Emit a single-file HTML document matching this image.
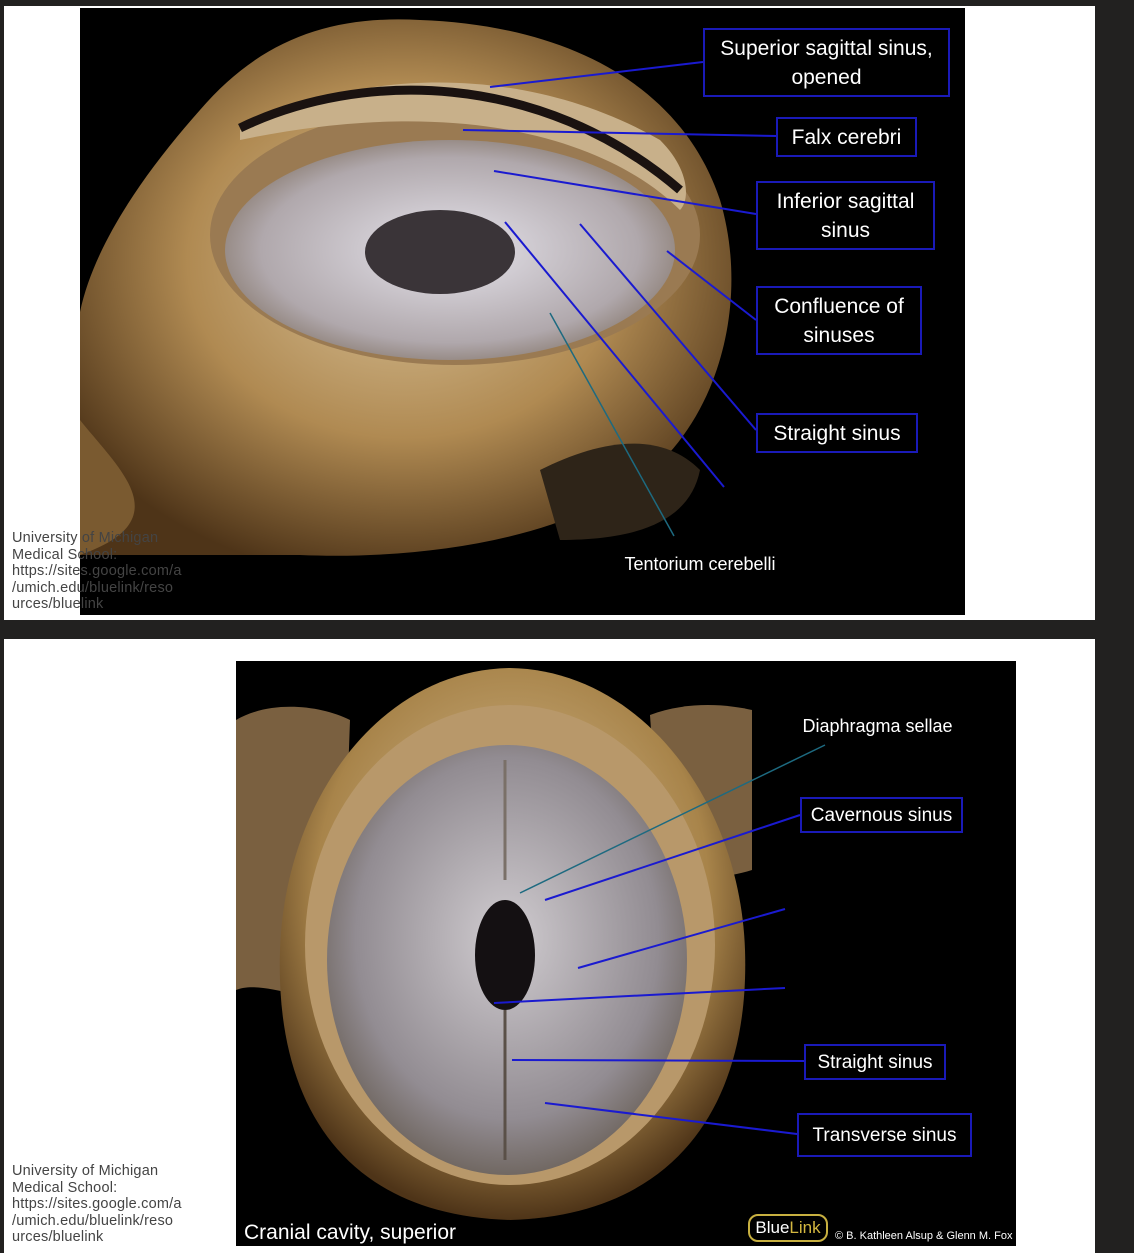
<!DOCTYPE html>
<html><head><meta charset="utf-8"><style>
html,body{margin:0;padding:0;background:#222120;}
body{width:1134px;height:1253px;position:relative;overflow:hidden;font-family:"Liberation Sans",sans-serif;}
.slide{position:absolute;left:4px;width:1091px;background:#fff;}
.lbl{position:absolute;color:#fff;font-size:21px;text-align:center;line-height:29px;box-sizing:border-box;}
.bx{border:2px solid #1a1ab8;}
.cred{position:absolute;left:12px;font-size:14.5px;line-height:16.5px;color:#444;letter-spacing:0.2px;}
</style></head><body>
<div class="slide" style="top:6px;height:614px"></div>
<div class="slide" style="top:639px;height:614px"></div>

<svg width="1134" height="1253" style="position:absolute;left:0;top:0">
<defs>
<radialGradient id="tan" cx="50%" cy="45%" r="60%">
<stop offset="0" stop-color="#d8c29a"/><stop offset="0.55" stop-color="#b08a52"/><stop offset="1" stop-color="#4e3418"/></radialGradient>
<radialGradient id="inner" cx="50%" cy="50%" r="60%">
<stop offset="0" stop-color="#e6e4ec"/><stop offset="0.7" stop-color="#b0a8ac"/><stop offset="1" stop-color="#7a6a5a"/></radialGradient>
<radialGradient id="tan2" cx="50%" cy="40%" r="60%">
<stop offset="0" stop-color="#d9c197"/><stop offset="0.7" stop-color="#a8844a"/><stop offset="1" stop-color="#4e3418"/></radialGradient>
<radialGradient id="inner2" cx="50%" cy="45%" r="60%">
<stop offset="0" stop-color="#d0ccd0"/><stop offset="0.7" stop-color="#928c92"/><stop offset="1" stop-color="#645a50"/></radialGradient>
<clipPath id="c1"><rect x="80" y="8" width="885" height="607"/></clipPath>
<clipPath id="c2"><rect x="236" y="661" width="780" height="585"/></clipPath>
</defs>
<rect x="80" y="8" width="885" height="607" fill="#000"/>
<g clip-path="url(#c1)">
<path d="M80 380 C60 300 120 200 200 110 C260 40 330 15 420 20 C560 25 680 80 720 200 C750 300 720 420 640 480 C560 540 420 560 300 555 L80 555 Z" fill="url(#tan)"/>
<path d="M80 420 C120 470 180 520 80 555 Z" fill="#7a5a30"/>
<ellipse cx="455" cy="235" rx="245" ry="130" fill="#9a7a52"/>
<ellipse cx="450" cy="250" rx="225" ry="110" fill="url(#inner)"/>
<path d="M240 130 C350 70 520 60 660 140 C690 170 690 200 680 210 C620 150 480 90 240 140 Z" fill="#c8b08a"/>
<path d="M240 128 C360 70 540 70 680 190" stroke="#1a1210" stroke-width="9" fill="none"/>
<ellipse cx="440" cy="252" rx="75" ry="42" fill="#3a3438"/>
<path d="M540 470 C600 440 660 430 700 470 C690 520 640 540 560 540 Z" fill="#2e2418"/>
</g>
<g stroke="#1a1ad0" stroke-width="2" fill="none">
<line x1="490" y1="87" x2="703" y2="62"/>
<line x1="463" y1="130" x2="777" y2="136"/>
<line x1="494" y1="171" x2="756" y2="214"/>
<line x1="667" y1="251" x2="756" y2="320"/>
<line x1="580" y1="224" x2="756" y2="430"/>
<line x1="505" y1="222" x2="724" y2="487"/>
</g>
<line x1="550" y1="313" x2="674" y2="536" stroke="#1d6a80" stroke-width="1.5"/>

<rect x="236" y="661" width="780" height="585" fill="#000"/>
<g clip-path="url(#c2)">
<path d="M236 720 C270 700 320 705 350 720 L340 1000 C300 1000 260 980 236 990 Z" fill="#7a6040"/>
<path d="M650 715 C690 700 730 705 752 710 L752 870 C720 880 690 880 660 860 Z" fill="#7a6040"/>
<path d="M510 668 C640 670 740 800 745 950 C750 1100 680 1215 510 1220 C340 1215 275 1100 280 950 C285 800 380 670 510 668 Z" fill="url(#tan2)"/>
<ellipse cx="510" cy="945" rx="205" ry="240" fill="#b8986a"/>
<ellipse cx="507" cy="960" rx="180" ry="215" fill="url(#inner2)"/>
<ellipse cx="505" cy="955" rx="30" ry="55" fill="#141012"/>
<path d="M505 1010 L505 1160" stroke="#5a5048" stroke-width="3"/>
<path d="M505 760 L505 880" stroke="#7a7068" stroke-width="3"/>
</g>
<g stroke="#1a1ad0" stroke-width="2" fill="none">
<line x1="545" y1="900" x2="800" y2="815"/>
<line x1="578" y1="968" x2="785" y2="909"/>
<line x1="494" y1="1003" x2="785" y2="988"/>
<line x1="512" y1="1060" x2="804" y2="1061"/>
<line x1="545" y1="1103" x2="797" y2="1134"/>
</g>
<line x1="520" y1="893" x2="825" y2="745" stroke="#1d6a80" stroke-width="1.5"/>
</svg>

<div class="lbl bx" style="left:703px;top:28px;width:247px;height:69px;padding-top:4px">Superior sagittal sinus,<br>opened</div>
<div class="lbl bx" style="left:776px;top:117px;width:141px;height:40px;padding-top:4px">Falx cerebri</div>
<div class="lbl bx" style="left:756px;top:181px;width:179px;height:69px;padding-top:4px">Inferior sagittal<br>sinus</div>
<div class="lbl bx" style="left:756px;top:286px;width:166px;height:69px;padding-top:4px">Confluence of<br>sinuses</div>
<div class="lbl bx" style="left:756px;top:413px;width:162px;height:40px;padding-top:4px">Straight sinus</div>
<div class="lbl" style="left:600px;top:550px;width:200px;font-size:18px">Tentorium cerebelli</div>

<div class="lbl" style="left:780px;top:712px;width:195px;font-size:18px">Diaphragma sellae</div>
<div class="lbl bx" style="left:800px;top:797px;width:163px;height:36px;font-size:19px;padding-top:2px">Cavernous sinus</div>
<div class="lbl bx" style="left:804px;top:1044px;width:142px;height:36px;font-size:19px;padding-top:2px">Straight sinus</div>
<div class="lbl bx" style="left:797px;top:1113px;width:175px;height:44px;font-size:19px;padding-top:6px">Transverse sinus</div>
<div class="lbl" style="left:244px;top:1218px;text-align:left;font-size:21px">Cranial cavity, superior</div>
<div style="position:absolute;left:748px;top:1214px;width:80px;height:28px;border:2px solid #c8b040;border-radius:10px;box-sizing:border-box;color:#fff;font-size:17px;line-height:24px;text-align:center">Blue<span style="color:#d4b840">Link</span></div>
<div style="position:absolute;left:835px;top:1230px;color:#fff;font-size:11px">© B. Kathleen Alsup &amp; Glenn M. Fox</div>

<div class="cred" style="top:530px">University of Michigan<br>Medical School:<br>https://sites.google.com/a<br>/umich.edu/bluelink/reso<br>urces/bluelink</div>
<div class="cred" style="top:1163px">University of Michigan<br>Medical School:<br>https://sites.google.com/a<br>/umich.edu/bluelink/reso<br>urces/bluelink</div>
</body></html>
